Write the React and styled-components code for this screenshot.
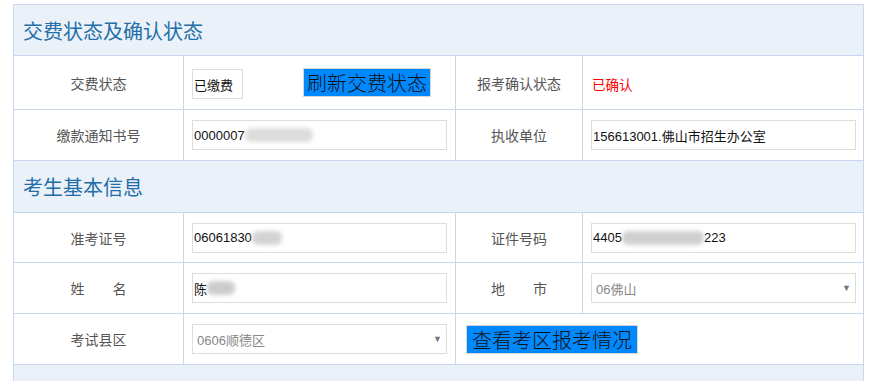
import React from "react";
import styled, { createGlobalStyle } from "styled-components";

const Global = createGlobalStyle`
  html, body { margin: 0; padding: 0; background: #fff; }
  body { font-family: "Noto Sans CJK SC", "Microsoft YaHei", sans-serif; }
`;

const Page = styled.div`
  padding: 4px 0 0 13px;
  width: 874px;
  height: 381px;
  overflow: hidden;
  box-sizing: border-box;
`;

const Table = styled.table`
  border-collapse: collapse;
  width: 851px;
  table-layout: fixed;
  border: 1px solid #c9d7ee;
`;

const HeadRow = styled.tr`
  height: ${(p) => p.$h || 51}px;
`;

const HeadCell = styled.th`
  background: #eaf1f9;
  border: 1px solid #c9d7ee;
  text-align: left;
  padding: 0 0 0 9px;
  font-weight: normal;
  font-size: 20px;
  color: #236ea8;
  vertical-align: middle;
`;

const Row = styled.tr`
  height: ${(p) => p.$h || 51}px;
`;

const Label = styled.td`
  border: 1px solid #c9d7ee;
  text-align: center;
  font-size: 14px;
  color: #555;
  white-space: pre;
  vertical-align: middle;
`;

const Value = styled.td`
  border: 1px solid #c9d7ee;
  padding: 0 8px;
  vertical-align: middle;
`;

const ValueFlex = styled.div`
  display: flex;
  align-items: center;
`;

const Field = styled.div`
  box-sizing: border-box;
  width: ${(p) => p.$w || 255}px;
  height: 30px;
  border: 1px solid #ddd;
  background: #fff;
  display: flex;
  align-items: center;
  padding: 0 ${(p) => (p.$select ? 4 : 1)}px 0 ${(p) => (p.$select ? 4 : 1)}px;
  font-family: "Liberation Sans", "Noto Sans CJK SC", sans-serif;
  font-size: 13px;
  color: ${(p) => (p.$select ? "#888" : "#111")};
  white-space: nowrap;
  justify-content: ${(p) => (p.$select ? "space-between" : "flex-start")};
  margin-top: ${(p) => p.$mt || 0}px;
`;

const Arrow = styled.span`
  font-size: 9px;
  color: #777;
`;

const Blur = styled.span`
  display: inline-block;
  width: ${(p) => p.$w}px;
  height: 14px;
  background: ${(p) => p.$c || "#c9c9c9"};
  filter: blur(2px);
  border-radius: 6px;
  opacity: 0.8;
`;

const BlueButton = styled.button`
  height: 29px;
  box-sizing: border-box;
  border: 1px solid #d6d6d6;
  background: #0088ff;
  color: #111;
  font-family: "Noto Sans CJK SC", sans-serif;
  font-size: 20px;
  font-weight: 300;
  padding: 0 ${(p) => p.$px || 3}px;
  line-height: 27px;
  margin-left: ${(p) => p.$ml || 0}px;
  cursor: pointer;
`;

const Red = styled.span`
  color: #f00;
  font-size: 13.5px;
  padding-left: 1px;
`;

export default function App() {
  return (
    <>
      <Global />
      <Page>
        <Table>
          <colgroup>
            <col style={{ width: 170 }} />
            <col style={{ width: 272 }} />
            <col style={{ width: 127 }} />
            <col style={{ width: 281 }} />
          </colgroup>
          <tbody>
            <HeadRow $h={51}>
              <HeadCell colSpan={4}>交费状态及确认状态</HeadCell>
            </HeadRow>
            <Row $h={54}>
              <Label>交费状态</Label>
              <Value>
                <ValueFlex>
                  <Field $w={51} $mt={3}>已缴费</Field>
                  <BlueButton $ml={60} $px={3}>刷新交费状态</BlueButton>
                </ValueFlex>
              </Value>
              <Label>报考确认状态</Label>
              <Value>
                <Red>已确认</Red>
              </Value>
            </Row>
            <Row $h={51}>
              <Label>缴款通知书号</Label>
              <Value>
                <Field>
                  0000007<Blur $w={68} $c="#d4d4d4" />
                </Field>
              </Value>
              <Label>执收单位</Label>
              <Value>
                <Field $w={265}>156613001.佛山市招生办公室</Field>
              </Value>
            </Row>
            <HeadRow $h={52}>
              <HeadCell colSpan={4}>考生基本信息</HeadCell>
            </HeadRow>
            <Row $h={50}>
              <Label>准考证号</Label>
              <Value>
                <Field>
                  06061830<Blur $w={30} />
                </Field>
              </Value>
              <Label>证件号码</Label>
              <Value>
                <Field $w={265}>
                  4405<Blur $w={82} $c="#c4c4c4" />223
                </Field>
              </Value>
            </Row>
            <Row $h={51}>
              <Label>{"姓　　名"}</Label>
              <Value>
                <Field>
                  陈<Blur $w={28} $c="#c0c0c0" />
                </Field>
              </Value>
              <Label>{"地　　市"}</Label>
              <Value>
                <Field $w={265} $select>
                  06佛山<Arrow>▼</Arrow>
                </Field>
              </Value>
            </Row>
            <Row $h={51}>
              <Label>考试县区</Label>
              <Value>
                <Field $select>
                  0606顺德区<Arrow>▼</Arrow>
                </Field>
              </Value>
              <Value colSpan={2}>
                <ValueFlex>
                  <BlueButton $ml={2} $px={5}>查看考区报考情况</BlueButton>
                </ValueFlex>
              </Value>
            </Row>
            <HeadRow $h={30}>
              <HeadCell colSpan={4}></HeadCell>
            </HeadRow>
          </tbody>
        </Table>
      </Page>
    </>
  );
}
